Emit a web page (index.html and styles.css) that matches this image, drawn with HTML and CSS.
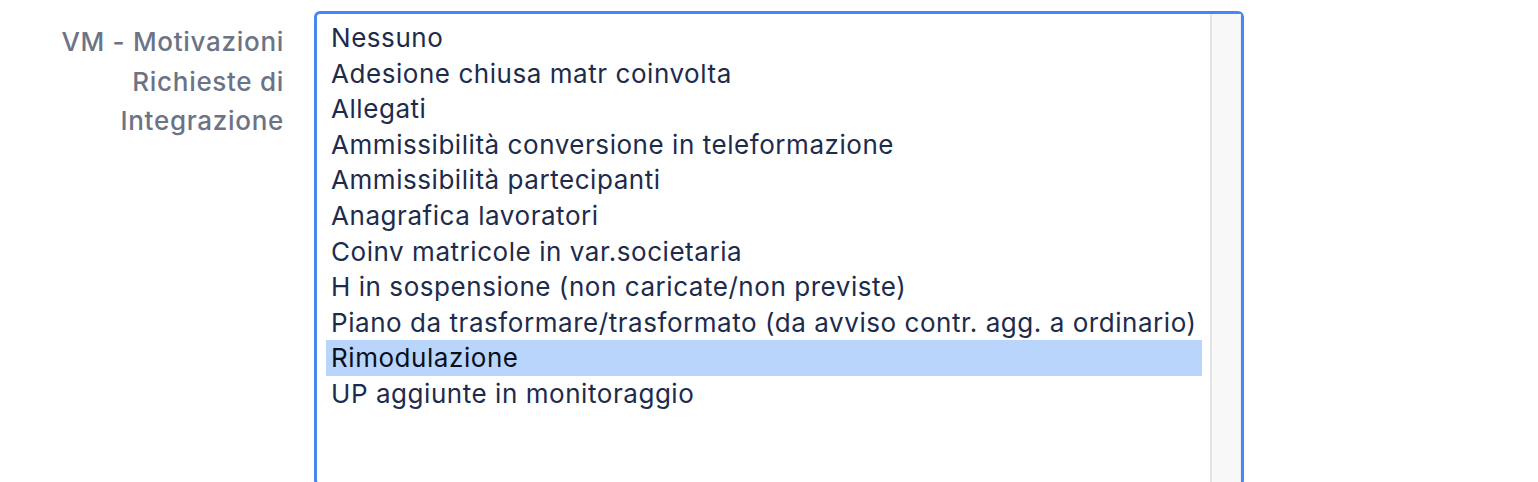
FILE: index.html
```html
<!DOCTYPE html>
<html lang="it">
<head>
<meta charset="utf-8">
<title>VM - Motivazioni Richieste di Integrazione</title>
<link rel="stylesheet" href="styles.css">
</head>
<body>
<div class="field">
  <label class="field-label">VM - Motivazioni Richieste di Integrazione</label>
  <div class="listbox">
    <div class="options">
      <div class="option">Nessuno</div>
      <div class="option">Adesione chiusa matr coinvolta</div>
      <div class="option">Allegati</div>
      <div class="option">Ammissibilità conversione in teleformazione</div>
      <div class="option">Ammissibilità partecipanti</div>
      <div class="option">Anagrafica lavoratori</div>
      <div class="option">Coinv matricole in var.societaria</div>
      <div class="option">H in sospensione (non caricate/non previste)</div>
      <div class="option">Piano da trasformare/trasformato (da avviso contr. agg. a ordinario)</div>
      <div class="option selected">Rimodulazione</div>
      <div class="option">UP aggiunte in monitoraggio</div>
    </div>
    <div class="scrolltrack"></div>
  </div>
</div>
</body>
</html>
```

FILE: styles.css
```css
html, body {
  margin: 0;
  padding: 0;
  background: #ffffff;
  overflow: hidden;
}
body {
  font-family: Inter, "Noto Sans", "Liberation Sans", sans-serif;
  width: 1538px;
  height: 482px;
}
.field {
  display: flex;
  align-items: flex-start;
  padding-top: 11px;
}
.field-label {
  width: 230px;
  margin-left: 54px;
  margin-right: 30px;
  text-align: right;
  color: #6b7385;
  font-size: 26px;
  font-weight: 500;
  letter-spacing: 0.7px;
  line-height: 39.5px;
  padding-top: 11px;
}
.listbox {
  width: 930px;
  height: 475px;
  border: 3px solid #4886f6;
  border-radius: 6px;
  display: flex;
  box-sizing: border-box;
}
.options {
  flex: 1;
  padding: 6px 8px 0 9px;
}
.option {
  height: 35.6px;
  line-height: 35.6px;
  font-size: 26px;
  letter-spacing: 0.55px;
  color: #1d2b4c;
  padding-left: 5px;
  white-space: nowrap;
}
.option.selected {
  background: #b9d5fb;
  color: #0b0f1a;
}
.scrolltrack {
  width: 28px;
  background: #f8f8f8;
  border-left: 2px solid #e4e4e4;
  border-right: 1px solid #efefef;
}
```
